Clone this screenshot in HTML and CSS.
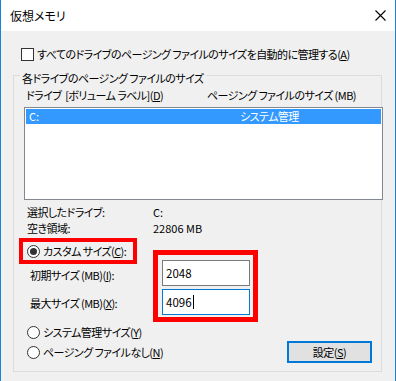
FILE: index.html
```html
<!DOCTYPE html>
<html lang="ja">
<head>
<meta charset="utf-8">
<title>仮想メモリ</title>
<link rel="stylesheet" href="styles.css">
</head>
<body>
<div class="window">
  <div class="titlebar">
    <span class="title">仮想メモリ</span>
    <svg class="close" width="11" height="11" viewBox="0 0 11 11"><path d="M0.5 0.5 L10.5 10.5 M10.5 0.5 L0.5 10.5" stroke="#000" stroke-width="1.1" fill="none"/></svg>
  </div>
  <div class="content">
    <div class="check-row">
      <span class="checkbox"></span>
      <span>すべてのドライブのページング ファイルのサイズを自動的に管理する(<u>A</u>)</span>
    </div>
    <div class="group">
      <div class="legend">各ドライブのページング ファイルのサイズ</div>
      <div class="cols">
        <span class="col1">ドライブ  [ボリューム ラベル](<u>D</u>)</span>
        <span class="col2">ページング ファイルのサイズ (MB)</span>
      </div>
      <div class="listbox">
        <div class="list-row selected"><span class="c1 num">C:</span><span class="c2">システム管理</span></div>
      </div>
      <div class="info">
        <div class="info-row"><span class="info-label">選択したドライブ:</span><span class="num">C:</span></div>
        <div class="info-row"><span class="info-label">空き領域:</span><span class="num">22806 MB</span></div>
      </div>
      <div class="custom">
        <div class="custom-left">
          <div class="hl hl-radio">
            <span class="radio checked"></span><span>カスタム サイズ(<u>C</u>):</span>
          </div>
          <div class="field-label first">初期サイズ (MB)(<u>I</u>):</div>
          <div class="field-label">最大サイズ (MB)(<u>X</u>):</div>
        </div>
        <div class="hl hl-inputs">
          <div class="edit num">2048</div>
          <div class="edit focused num">4096<span class="caret"></span></div>
        </div>
      </div>
      <div class="bottom">
        <div class="radios">
          <div class="radio-row"><span class="radio"></span><span>システム管理サイズ(<u>Y</u>)</span></div>
          <div class="radio-row"><span class="radio"></span><span>ページング ファイルなし(<u>N</u>)</span></div>
        </div>
        <div class="button">設定(<u>S</u>)</div>
      </div>
    </div>
  </div>
</div>
</body>
</html>
```
FILE: styles.css
```css
* { box-sizing: border-box; }
html, body { margin: 0; padding: 0; }
body {
  width: 396px;
  height: 381px;
  overflow: hidden;
  background: #f0f0f0;
  font-family: "Noto Sans CJK JP", "Noto Sans", sans-serif;
  font-size: 11px;
  letter-spacing: -0.55px;
  color: #000;
  font-feature-settings: "palt" 1;
}
u { text-decoration: underline; text-underline-offset: 1px; }
.num { letter-spacing: 0; }

.window {
  height: 381px;
  border-left: 1px solid #1883d7;
  border-right: 1px solid #1883d7;
  background: #f0f0f0;
}

.titlebar {
  height: 31px;
  background: #fff;
  display: flex;
  align-items: center;
  justify-content: space-between;
  padding: 0 9px 0 9px;
}
.title { line-height: 16px; font-size: 12px; letter-spacing: 0; }
.close { display: block; }

.content { padding: 15px 13px 0 12px; }

.check-row {
  display: flex;
  align-items: center;
  height: 16px;
  margin-left: 8px;
  gap: 3px;
  white-space: nowrap;
}
.checkbox {
  width: 13px;
  height: 13px;
  border: 1px solid #333;
  background: #fff;
  flex: none;
}

.group {
  margin-top: 13px;
  width: 369px;
  border: 1px solid #dcdcdc;
  padding-bottom: 8px;
}
.legend {
  width: fit-content;
  margin: -6px 0 0 6px;
  padding: 0 2px;
  height: 16px;
  line-height: 16px;
  background: #f0f0f0;
  white-space: nowrap;
}

.cols {
  display: flex;
  height: 16px;
  line-height: 16px;
  margin-top: 1px;
  white-space: pre;
}
.col1 { margin-left: 12px; width: 181px; }

.listbox {
  margin: 4px 0 0 10px;
  width: 359px;
  height: 93px;
  border: 1px solid #828790;
  background: #fff;
  padding: 1px;
}
.list-row {
  display: flex;
  height: 15px;
  line-height: 15px;
  white-space: nowrap;
}
.list-row.selected { background: #3399ff; color: #fff; }
.c1 { padding-left: 3px; width: 214px; }

.info { margin-top: 4px; }
.info-row {
  display: flex;
  height: 16px;
  line-height: 16px;
  white-space: nowrap;
}
.info-label { margin-left: 13px; width: 126px; }

.custom {
  display: flex;
  margin-top: 2px;
}
.custom-left { width: 139px; }
.hl { border: 4px solid #ff0000; }
.hl-radio {
  margin-left: 5px;
  width: 118px;
  height: 26px;
  display: flex;
  align-items: center;
  padding-left: 4px;
  gap: 3px;
  white-space: nowrap;
}
.field-label {
  margin: 12px 0 0 16px;
  height: 16px;
  line-height: 16px;
  white-space: nowrap;
}
.field-label.first { margin-top: 3px; }

.hl-inputs {
  margin-top: 12px;
  width: 105px;
  border-width: 5px;
  padding: 5px 3px 2px 4px;
  display: flex;
  flex-direction: column;
  gap: 3px;
}
.edit {
  width: 88px;
  height: 26px;
  border: 1px solid #7a7a7a;
  background: #fff;
  padding-left: 3px;
  font-size: 11.5px;
  display: flex;
  align-items: center;
}
.edit.focused { border-color: #0078d7; }
.caret {
  display: inline-block;
  width: 1px;
  height: 14px;
  background: #000;
  margin-left: 1px;
}

.radio {
  width: 13px;
  height: 13px;
  border: 1px solid #333;
  border-radius: 50%;
  background: #fff;
  flex: none;
  display: flex;
  align-items: center;
  justify-content: center;
}
.radio.checked::after {
  content: "";
  width: 7px;
  height: 7px;
  border-radius: 50%;
  background: #333;
}

.bottom {
  display: flex;
  margin-top: 2px;
}
.radios {
  margin-left: 13px;
  display: flex;
  flex-direction: column;
  gap: 4px;
}
.radio-row {
  display: flex;
  align-items: center;
  height: 16px;
  gap: 3px;
  white-space: nowrap;
}
.button {
  margin: 17px 9px 0 auto;
  width: 85px;
  height: 22px;
  border: 2px solid #0078d7;
  background: #e1e1e1;
  display: flex;
  align-items: center;
  justify-content: center;
  line-height: 16px;
}
```
